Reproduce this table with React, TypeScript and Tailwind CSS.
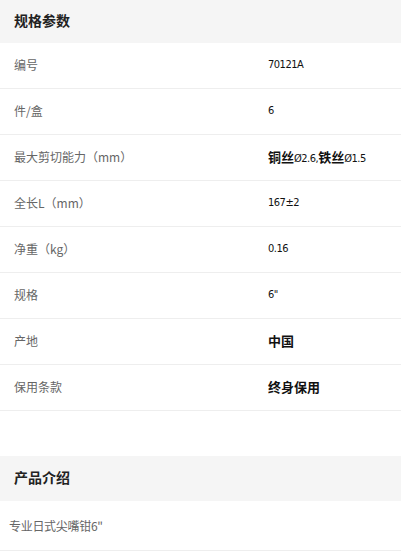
import React from 'react';

type Seg = { t: string; cjk?: boolean };

const specs: { label: string; value: Seg[] }[] = [
  { label: '编号', value: [{ t: '70121A' }] },
  { label: '件/盒', value: [{ t: '6' }] },
  {
    label: '最大剪切能力（mm）',
    value: [{ t: '铜丝', cjk: true }, { t: 'Ø2.6,' }, { t: '铁丝', cjk: true }, { t: 'Ø1.5' }],
  },
  { label: '全长L（mm）', value: [{ t: '167±2' }] },
  { label: '净重（kg）', value: [{ t: '0.16' }] },
  { label: '规格', value: [{ t: '6"' }] },
  { label: '产地', value: [{ t: '中国', cjk: true }] },
  { label: '保用条款', value: [{ t: '终身保用', cjk: true }] },
];

const sans = 'font-["Noto_Sans_CJK_SC",sans-serif]';
const narrow = 'font-["DejaVu_Sans_Condensed","Liberation_Sans",sans-serif]';

export default function App() {
  return (
    <div className={`w-[401px] min-h-[559px] bg-white ${sans}`}>
      {/* 规格参数 */}
      <div className="h-[43px] bg-[#f5f5f5] px-[14px] pb-[2px] flex items-center">
        <h2 className="text-[14px] font-bold text-[#222]">规格参数</h2>
      </div>
      {specs.map((s) => (
        <div key={s.label} className="h-[46px] border-b border-[#eeeeee] flex items-center pb-[1px]">
          <div className="w-[268px] pl-[14px] text-[12px] text-[#666]">{s.label}</div>
          <div className="text-[#111] flex items-baseline">
            {s.value.map((v, i) =>
              v.cjk ? (
                <span key={i} className="text-[13px] font-bold">
                  {v.t}
                </span>
              ) : (
                <span key={i} className={`text-[11px] tracking-[-0.5px] ${narrow}`}>
                  {v.t}
                </span>
              )
            )}
          </div>
        </div>
      ))}

      {/* 产品介绍 */}
      <div className="mt-[45px] h-[45px] bg-[#f5f5f5] px-[14px] pb-[2px] flex items-center">
        <h2 className="text-[14px] font-bold text-[#222]">产品介绍</h2>
      </div>
      <div className="h-[50px] border-b border-[#eeeeee] flex items-center pl-[9px]">
        <p className="text-[12px] text-[#666] tracking-[-0.3px]">专业日式尖嘴钳6"</p>
      </div>
    </div>
  );
}
